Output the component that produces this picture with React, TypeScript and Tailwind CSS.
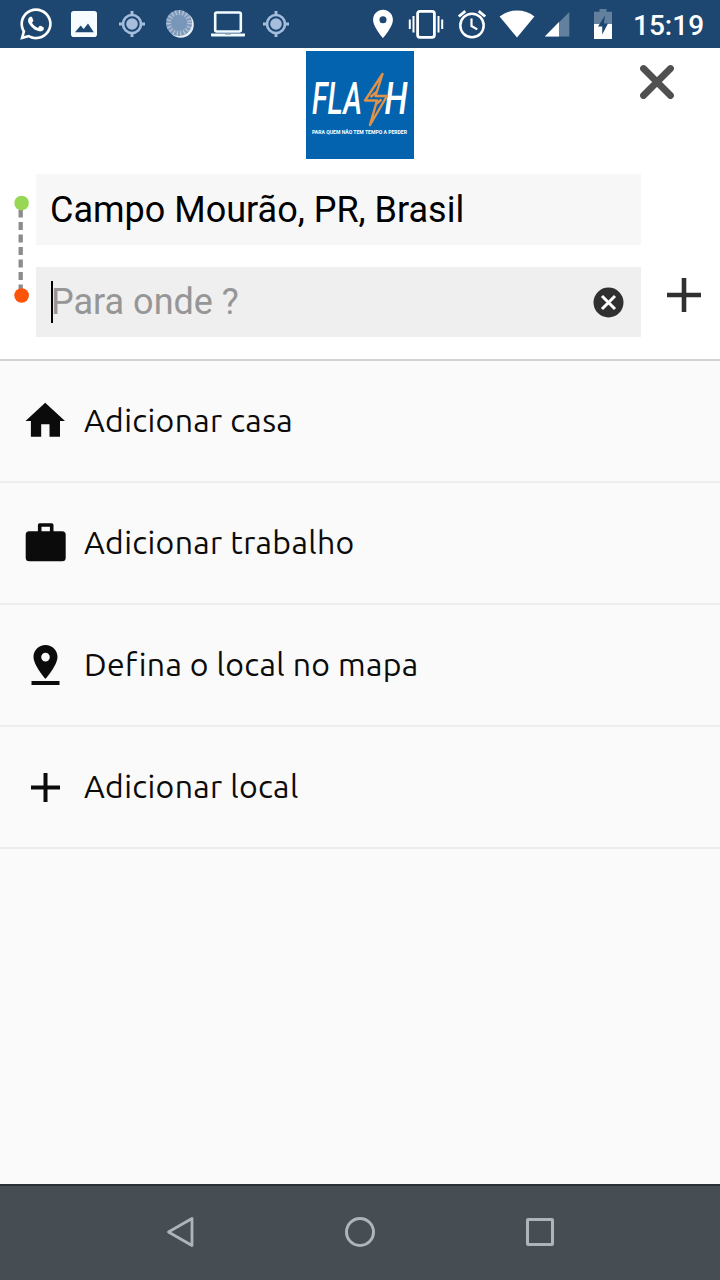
import React from 'react';
import { FaWhatsapp } from 'react-icons/fa';
import { MdLocationOn } from 'react-icons/md';

// Status bar icons that the icon packs don't cover
const PictureIcon = () => (
  <svg width="26" height="26" viewBox="0 0 26 26">
    <rect width="26" height="26" rx="2.8" fill="#f7fdff" />
    <path d="M4 21.3l5.7-6.8 3 3.5 4.3-5.5 5.8 8.8z" fill="#1d4670" />
  </svg>
);

const GpsIcon = () => (
  <svg width="28" height="28" viewBox="0 0 28 28" fill="none" stroke="#a6bddb">
    <circle cx="14" cy="14" r="9" strokeWidth="2.6" />
    <circle cx="14" cy="14" r="5.8" fill="#a6bddb" stroke="none" />
    <path d="M14 1v4.5M14 22.5V27M1 14h4.5M22.5 14H27" strokeWidth="3" />
  </svg>
);

const SpinnerIcon = () => (
  <svg width="30" height="30" viewBox="0 0 30 30" fill="none">
    <circle cx="15.8" cy="15.8" r="13" fill="#e6eef6" />
    <circle cx="14" cy="14" r="13" fill="#7f9abb" />
    <circle cx="14" cy="14" r="10.5" stroke="#b7c7da" strokeWidth="4.6" strokeDasharray="1.2 2.3" />
    <circle cx="14" cy="14" r="7.5" fill="#7896ba" />
  </svg>
);

const LaptopIcon = () => (
  <svg width="36" height="28" viewBox="0 0 36 28" fill="none">
    <rect x="5.2" y="2.5" width="25.6" height="19" rx="1.5" stroke="#f2fbff" strokeWidth="2.6" />
    <path d="M1 23.4h34v2.1q0 1-1 1H2q-1 0-1-1z" fill="#f2fbff" />
    <path d="M15 23.4h6v1.2h-6z" fill="#7f9abb" />
  </svg>
);

const VibrateIcon = () => (
  <svg width="36" height="30" viewBox="0 0 36 30" fill="none" stroke="#fff">
    <rect x="9.6" y="2.3" width="16.8" height="26" rx="2.2" strokeWidth="2.8" />
    <path d="M5.5 7v16.5M1.8 10.5v9.5M30.5 7v16.5M34.2 10.5v9.5" strokeWidth="2" />
  </svg>
);

const AlarmIcon = () => (
  <svg width="30" height="30" viewBox="0 0 30 30" fill="none" stroke="#fff">
    <circle cx="15" cy="16.5" r="11.7" strokeWidth="2.5" />
    <path d="M1.8 7.5l6.5-5.3M28.2 7.5l-6.5-5.3" strokeWidth="2.8" />
    <path d="M14.5 9.5v7.5l5.8 3.4" strokeWidth="2.2" />
  </svg>
);

const WifiIcon = () => (
  <svg width="36" height="28" viewBox="0 0 36 28">
    <path d="M.6 6.5C5.5 2.6 11.5.6 18 .6s12.500 2 17.400 5.900L18 27.600z" fill="#fff" />
  </svg>
);

const SignalIcon = () => (
  <svg width="26" height="26" viewBox="0 0 26 26">
    <path d="M25.300 1v24.500H.8z" fill="#64809f" />
    <path d="M15 11v14.500H.8z" fill="#fff" />
  </svg>
);

const BatteryIcon = () => (
  <svg width="18" height="30" viewBox="0 0 18 30">
    <path d="M5.5 0h7v2.800H18V15H0V2.800h5.500z" fill="#64809f" />
    <path d="M0 15h18v15H0z" fill="#fff" />
    <path d="M11 6.500L4 17.500h4.200v8L14 14.500H10z" fill="#1d4670" />
  </svg>
);

const FlashLogo = () => (
  <svg width="108" height="108" viewBox="0 0 108 108">
    <rect width="108" height="108" fill="#0463ae" />
    <g fill="#fff" fontFamily="Roboto, 'Liberation Sans', sans-serif">
      <text x="6" y="62.5" fontSize="44" fontStyle="italic" fontWeight="500" textLength="50" lengthAdjust="spacingAndGlyphs">FLA</text>
      <text x="78.5" y="62.5" fontSize="44" fontStyle="italic" fontWeight="500" textLength="23" lengthAdjust="spacingAndGlyphs">H</text>
      <text x="6" y="82.5" fontSize="6" fontWeight="700" textLength="95" lengthAdjust="spacingAndGlyphs">PARA QUEM NÃO TEM TEMPO A PERDER</text>
    </g>
    <g fill="none" stroke="#e0924a" strokeWidth="2.4" strokeLinejoin="round">
      <path d="M76.5 23L59 49.500h12L64 74l17-29H69.500z" />
      <path d="M70.500 41l-6 5M69.500 53.500l6-5" />
    </g>
  </svg>
);

const HouseIcon = () => (
  <svg width="41" height="36" viewBox="0 0 41 36" className="-mt-0.5">
    <path d="M20.200.7L40 19h-5v15.700H24.500V22.200h-8.300v12.500H5.900V19H.5z" fill="#0b0b0b" />
  </svg>
);

const BriefcaseIcon = () => (
  <svg width="41" height="40" viewBox="0 0 41 40">
    <path d="M14.700 10V2h12v8" fill="none" stroke="#0b0b0b" strokeWidth="3.600" strokeLinejoin="round" />
    <rect x=".7" y="8.300" width="40" height="30" rx="3.500" fill="#0b0b0b" />
  </svg>
);

const PinDropIcon = () => (
  <svg width="29" height="42" viewBox="0.5 0 29 42" fill="#0b0b0b">
    <path fillRule="evenodd" d="M15 1C8.300 1 3 6.200 3 12.800 3 21.500 15 35 15 35s12-13.500 12-22.200C27 6.200 21.700 1 15 1zm0 7.800a4.300 4.300 0 1 1 0 8.600 4.300 4.300 0 0 1 0-8.600z" />
    <rect x="1" y="37" width="28" height="4" />
  </svg>
);

const PlusIcon = ({ size, color, stroke }: { size: number; color: string; stroke: number }) => (
  <svg width={size} height={size} viewBox={`0 0 ${size} ${size}`} stroke={color} strokeWidth={stroke}>
    <path d={`M${size / 2} 0v${size}M0 ${size / 2}h${size}`} />
  </svg>
);

const OPTIONS = [
  { label: 'Adicionar casa', icon: <HouseIcon /> },
  { label: 'Adicionar trabalho', icon: <BriefcaseIcon /> },
  { label: 'Defina o local no mapa', icon: <PinDropIcon /> },
  { label: 'Adicionar local', icon: <PlusIcon size={29} color="#0b0b0b" stroke={4} /> },
];

const SLOT = 'w-12 flex justify-center';

function StatusBar() {
  return (
    <div className="h-12 bg-[#1d4670] flex items-center text-white shrink-0">
      <div className="w-[360px] pl-3 flex items-center">
        <div className={SLOT}><FaWhatsapp size={36} /></div>
        <div className={SLOT}><PictureIcon /></div>
        <div className={SLOT}><GpsIcon /></div>
        <div className={SLOT}><SpinnerIcon /></div>
        <div className={SLOT}><LaptopIcon /></div>
        <div className={SLOT}><GpsIcon /></div>
      </div>
      <div className="w-[46px] flex justify-center"><MdLocationOn size={34} /></div>
      <div className="w-10 flex justify-center"><VibrateIcon /></div>
      <div className="w-[51px] flex justify-center"><AlarmIcon /></div>
      <div className="w-10 flex justify-center"><WifiIcon /></div>
      <div className="w-10 flex justify-center"><SignalIcon /></div>
      <div className="w-[52px] flex justify-center"><BatteryIcon /></div>
      <span className="pl-1 pt-[3px] text-[28px] leading-none font-medium">15:19</span>
    </div>
  );
}

export default function App() {
  return (
    <div className="w-[720px] h-[1280px] flex flex-col bg-[#fafafa] font-[Roboto,sans-serif] overflow-hidden">
      <StatusBar />

      {/* Search header */}
      <header className="h-[313px] shrink-0 bg-white border-b-2 border-[#d2d2d2]">
        <div className="grid grid-cols-3 pt-[3px]">
          <div />
          <div className="flex justify-center"><FlashLogo /></div>
          <button className="justify-self-end mr-[45px] mt-[13px] h-9">
            <svg width="36" height="36" viewBox="0 0 36 36" stroke="#505050" strokeWidth="6.8" strokeLinecap="round">
              <path d="M4.5 4.5l27 27M31.5 4.500l-27 27" />
            </svg>
          </button>
        </div>

        <div className="flex mt-[15px]">
          {/* Origin / destination markers */}
          <svg className="shrink-0" width="36" height="163" viewBox="0 0 36 163">
            <path d="M20.7 35.5v80" stroke="#8c8c8c" strokeWidth="4.3" strokeDasharray="8 4.5" />
            <circle cx="21.6" cy="29" r="7.3" fill="#97d753" />
            <circle cx="21.6" cy="121.5" r="7.3" fill="#fb5409" />
          </svg>
          <div className="w-[605px] flex flex-col gap-[22px] text-[36px]">
            <div className="h-[71px] px-[14px] flex items-center bg-[#f7f7f7] text-black">
              <span className="whitespace-nowrap">Campo Mourão, PR, Brasil</span>
            </div>
            <div className="h-[70px] pl-[15px] pr-[17px] flex items-center bg-[#efefef] text-[#969696]">
              <span className="w-0.5 h-[42px] bg-black -mr-0.5" />
              <span className="flex-1">Para onde ?</span>
              <svg width="31" height="31" viewBox="0 0 31 31">
                <circle cx="15.5" cy="15.5" r="15" fill="#303030" />
                <path d="M9 9l13 13M22 9L9 22" stroke="#fff" strokeWidth="3" />
              </svg>
            </div>
          </div>
          <button className="ml-[26px] mt-[104px] h-[34px]">
            <PlusIcon size={34} color="#303030" stroke={4.6} />
          </button>
        </div>
      </header>

      {/* Shortcuts */}
      <ul className="flex-1 text-[#0b0b0b] font-[Ubuntu,'Noto_Sans',sans-serif]">
        {OPTIONS.map((option) => (
          <li key={option.label} className="h-[122px] pl-[21px] flex items-center border-b-2 border-[#ededed]">
            <div className="w-[49px] flex justify-center">{option.icon}</div>
            <span className="ml-[14px] pb-0.5 text-[32px] tracking-[0.34px] whitespace-nowrap">{option.label}</span>
          </li>
        ))}
      </ul>

      {/* Android navigation bar */}
      <nav className="h-24 pb-0.5 shrink-0 bg-[#464d53] border-t-2 border-[#2a3038] flex justify-center items-center">
        <div className="w-[180px] flex justify-center">
          <svg width="28" height="32" viewBox="0 0 28 32" fill="none" stroke="#afb4b8" strokeWidth="2.8" strokeLinejoin="round">
            <path d="M2.5 16L26 2.500v27z" />
          </svg>
        </div>
        <div className="w-[180px] flex justify-center">
          <div className="w-[30px] h-[30px] rounded-full border-[3px] border-[#afb4b8]" />
        </div>
        <div className="w-[180px] flex justify-center">
          <div className="w-7 h-7 rounded-xs border-[3px] border-[#afb4b8]" />
        </div>
      </nav>
    </div>
  );
}
